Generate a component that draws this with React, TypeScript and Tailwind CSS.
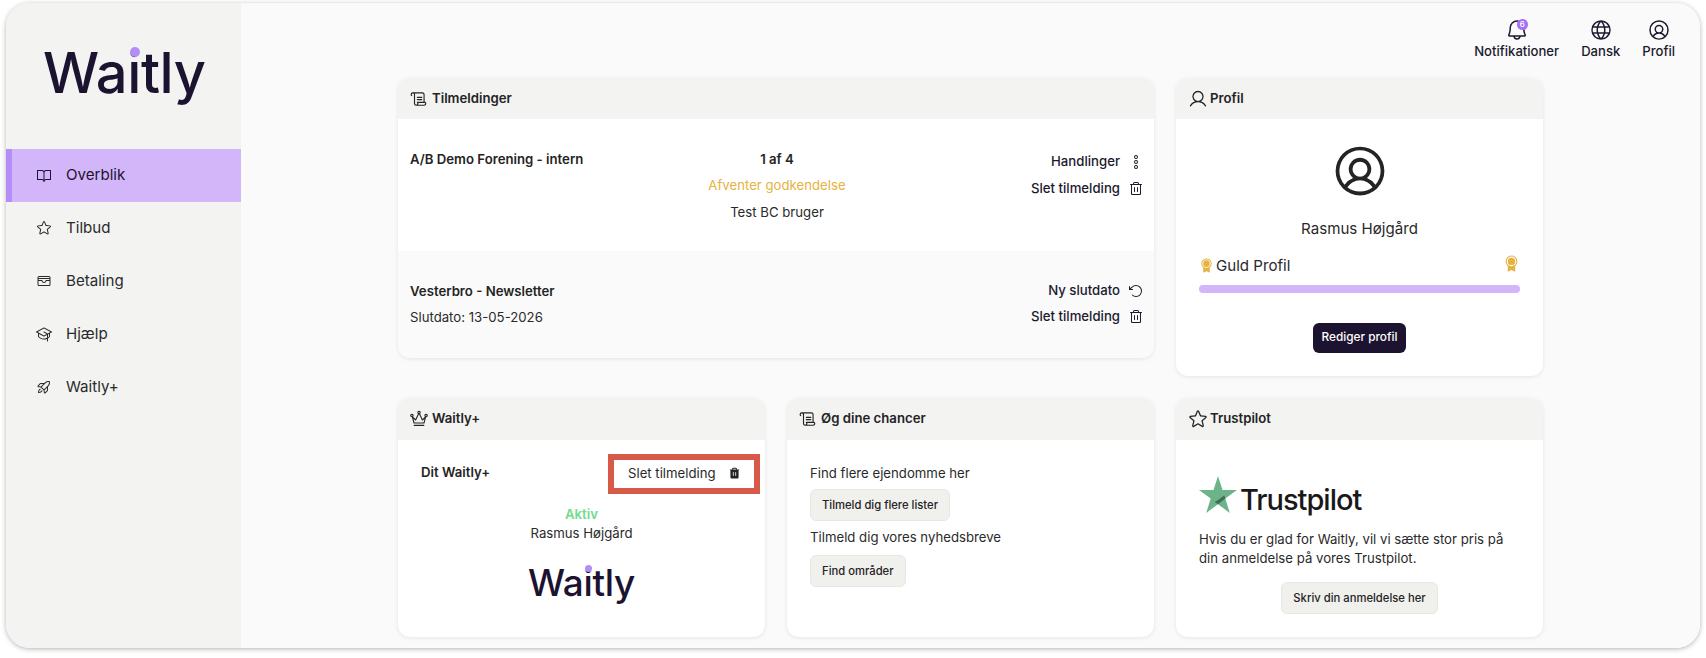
import React from "react";
import {
  PiArrowCounterClockwise,
  PiBell,
  PiBookOpen,
  PiCardholder,
  PiDotsThreeOutlineVertical,
  PiGlobe,
  PiGraduationCap,
  PiMedalFill,
  PiRocketLaunch,
  PiScroll,
  PiStar,
  PiTrash,
  PiTrashFill,
  PiUser,
  PiUserCircle,
} from "react-icons/pi";

const navItems = [
  { label: "Overblik", icon: PiBookOpen, active: true },
  { label: "Tilbud", icon: PiStar },
  { label: "Betaling", icon: PiCardholder },
  { label: "Hjælp", icon: PiGraduationCap },
  { label: "Waitly+", icon: PiRocketLaunch },
];

const CrownIcon = () => (
  <svg width="18" height="18" viewBox="0 0 18 18" fill="none" stroke="currentColor" strokeWidth="1.1">
    <circle cx="1.9" cy="5.6" r="1.2" />
    <circle cx="9" cy="2.6" r="1.2" />
    <circle cx="16.1" cy="5.6" r="1.2" />
    <path d="M2.4 6.8L4 13h10l1.6-6.2L12.4 10 9.4 3.8h-.8L5.6 10z" strokeLinejoin="round" />
    <path d="M4.2 15.4h9.6" strokeLinecap="round" />
  </svg>
);

const Logo = ({ big }: { big?: boolean }) => (
  <span
    className={`font-medium text-[#1c1330] inline-block ${
      big ? "text-[56px] leading-[56px] tracking-[-0.4px]" : "text-[37px] leading-[38px] tracking-[-0.3px]"
    }`}
  >
    Wa
    <span className="relative">
      i
      <span
        className={`absolute rounded-full bg-[#b48df7] ${
          big ? "w-[10px] h-[10px] left-[3px] top-[8px]" : "w-[7px] h-[7px] left-[2px] top-[5px]"
        }`}
      />
    </span>
    tly
  </span>
);

const Card = ({
  title,
  icon,
  className,
  headerClass = "h-[42px]",
  children,
}: {
  title: string;
  icon: React.ReactNode;
  className?: string;
  headerClass?: string;
  children: React.ReactNode;
}) => (
  <div className={`rounded-xl bg-white shadow-[0_1px_4px_rgba(0,0,0,0.09)] overflow-hidden flex flex-col ${className ?? ""}`}>
    <div className={`shrink-0 bg-[#f3f3f2] flex items-center gap-1 px-3 text-[13.2px] font-semibold text-[#242424] ${headerClass}`}>
      {icon}
      {title}
    </div>
    {children}
  </div>
);

const ActionLine = ({
  label,
  icon: Icon,
  tight,
}: {
  label: string;
  icon: React.ElementType;
  tight?: boolean;
}) => (
  <div
    className={`flex items-center justify-end gap-2 text-[13.2px] font-medium text-[#1c1a2e] ${
      tight ? "h-[26px]" : "h-[27px]"
    }`}
  >
    {label}
    <Icon size={16} />
  </div>
);

const GreyButton = ({ children }: { children: React.ReactNode }) => (
  <button className="h-[32px] px-[11px] rounded-md bg-[#f0f0ed] border border-[#e7e7e4] text-[11.25px] font-medium text-[#242424]">
    {children}
  </button>
);

const TopItem = ({ label, children }: { label: string; children: React.ReactNode }) => (
  <div className="flex flex-col items-center gap-[1px] text-[13.1px] font-medium text-[#1c1a2e] leading-4">
    {children}
    {label}
  </div>
);

export default function App() {
  return (
    <div className="w-[1706px] h-[658px] bg-white pt-[3px] px-[6px] font-['Inter',sans-serif] overflow-hidden">
      <div className="h-[645px] flex rounded-3xl overflow-hidden shadow-[0_1px_5px_rgba(0,0,0,0.3)]">
        <aside className="w-[235px] shrink-0 bg-[#f3f3f2]">
          <div className="h-[146px] pl-[37px] pt-[42px]">
            <Logo big />
          </div>
          <nav>
            {navItems.map((item) => (
              <div
                key={item.label}
                className={`h-[53px] flex items-center gap-[14px] pl-[30px] pb-[1px] text-[15.1px] ${
                  item.active
                    ? "bg-[#d3b5f9] border-l-[6px] border-[#b48df7] !pl-[24px] text-[#1c1330]"
                    : "text-[#2a2a2a]"
                }`}
              >
                <item.icon size={16} />
                {item.label}
              </div>
            ))}
          </nav>
        </aside>

        <main className="flex-1 bg-[#fafafa] flex flex-col">
          <div className="h-[75px] flex justify-end gap-[22px] pr-[25px] pt-[15px]">
            <TopItem label="Notifikationer">
              <div className="relative">
                <PiBell size={24} />
                <span className="absolute top-[1px] right-[1px] w-[11px] h-[11px] rounded-full bg-[#a56ef5] text-white text-[8px] leading-[11px] text-center">
                  6
                </span>
              </div>
            </TopItem>
            <TopItem label="Dansk">
              <PiGlobe size={24} />
            </TopItem>
            <TopItem label="Profil">
              <PiUserCircle size={24} />
            </TopItem>
          </div>

          <div className="ml-[157px] w-[1145px] grid grid-cols-[367px_367px_367px] gap-x-[22px] gap-y-[22px] items-start">
            <Card title="Tilmeldinger" icon={<PiScroll size={18} />} headerClass="h-[41px]" className="col-span-2 h-[280px]">
              <div className="h-[132px] grid grid-cols-3 pl-3 pr-[10px] pt-[22px] text-[13.2px]">
                <p className="font-semibold text-[#242424] leading-[28px] mt-[4px]">A/B Demo Forening - intern</p>
                <div className="text-center text-[#2a2a2a] mt-[4px]">
                  <p className="font-semibold leading-[28px] text-[#242424]">1 af 4</p>
                  <p className="leading-[25px] text-[#e7b23f]">Afventer godkendelse</p>
                  <p className="leading-[28px]">Test BC bruger</p>
                </div>
                <div className="mt-[7px]">
                  <ActionLine label="Handlinger" icon={PiDotsThreeOutlineVertical} />
                  <ActionLine label="Slet tilmelding" icon={PiTrash} />
                </div>
              </div>
              <div className="flex-1 bg-[#fafafa] flex justify-between pl-3 pr-[10px] pt-[26px] text-[13.2px]">
                <div className="text-[#2a2a2a]">
                  <p className="font-semibold leading-[28px] text-[#242424]">Vesterbro - Newsletter</p>
                  <p className="leading-[26px] mt-[-1px]">Slutdato: 13-05-2026</p>
                </div>
                <div className="mt-[1px]">
                  <ActionLine label="Ny slutdato" icon={PiArrowCounterClockwise} tight />
                  <ActionLine label="Slet tilmelding" icon={PiTrash} tight />
                </div>
              </div>
            </Card>

            <Card title="Profil" icon={<PiUser size={20} className="-mr-[2px]" />} headerClass="h-[41px]" className="h-[298px]">
              <div className="flex flex-col items-center pt-[22px] px-[23px] text-[#2a2a2a]">
                <PiUserCircle size={60} className="text-[#242424]" />
                <p className="text-[15.1px] leading-6 mt-[16px]">Rasmus Højgård</p>
                <div className="w-full flex items-center justify-between mt-[13px] h-[24px]">
                  <span className="flex items-center gap-[2px] text-[15.1px]">
                    <PiMedalFill size={15} className="text-[#e7b23f]" />
                    Guld Profil
                  </span>
                  <PiMedalFill size={17} className="text-[#e7b23f] -mt-[6px]" />
                </div>
                <div className="w-full h-2 rounded-full bg-[#d3b5f9] mt-[7px]" />
                <button className="mt-[30px] h-[30px] w-[93px] rounded-md bg-[#1c1330] text-white text-[11.8px] font-medium">
                  Rediger profil
                </button>
              </div>
            </Card>

            <Card title="Waitly+" icon={<CrownIcon />} className="h-[239px]">
              <div className="flex items-center justify-between pl-[23px] pr-[5px] pt-[14px]">
                <span className="text-[13.2px] font-semibold text-[#242424] -mt-[2px]">Dit Waitly+</span>
                <div className="w-[152px] h-[40px] border-[6px] border-[#d65a47] flex items-center justify-between pl-[14px] pr-[13px] text-[13.2px] text-[#2a2a2a]">
                  Slet tilmelding
                  <PiTrashFill size={13} className="text-[#242424] -mt-[2px]" />
                </div>
              </div>
              <div className="flex flex-col items-center pt-[11px] text-[13.2px] text-[#2a2a2a] leading-[19px]">
                <span className="font-semibold text-[#70dc8b]">Aktiv</span>
                <span>Rasmus Højgård</span>
                <div className="mt-[21px]">
                  <Logo />
                </div>
              </div>
            </Card>

            <Card title="Øg dine chancer" icon={<PiScroll size={18} />} className="h-[239px]">
              <div className="flex flex-col items-start pl-[23px] pt-[24px] text-[13.2px] text-[#2a2a2a]">
                <p className="leading-[19px]">Find flere ejendomme her</p>
                <div className="mt-[6px]">
                  <GreyButton>Tilmeld dig flere lister</GreyButton>
                </div>
                <p className="leading-[19px] mt-[7px]">Tilmeld dig vores nyhedsbreve</p>
                <div className="mt-[8px]">
                  <GreyButton>Find områder</GreyButton>
                </div>
              </div>
            </Card>

            <Card title="Trustpilot" icon={<PiStar size={20} className="-mr-[2px]" />} className="h-[239px]">
              <div className="flex flex-col px-[23px] pt-[35px] text-[13.2px] text-[#2a2a2a]">
                <div className="flex items-end gap-[3px] h-[38px]">
                  <svg width="38" height="37" viewBox="0 0 38 37">
                    <path fill="#6cb38a" d="M19 0l4.5 14H38L26.3 22.6 30.8 37 19 28.2 7.2 37l4.5-14.4L0 14h14.5z" />
                    <path fill="#3f6f52" d="M26.3 22.6l-1-3.1L19 24l-3.2 2 3.2 2.2z" />
                  </svg>
                  <span className="text-[29px] font-medium tracking-[-1px] leading-[36px] -mb-[5px] text-[#191919]">Trustpilot</span>
                </div>
                <p className="leading-[19px] mt-[17px]">
                  Hvis du er glad for Waitly, vil vi sætte stor pris på din anmeldelse på vores Trustpilot.
                </p>
                <div className="flex justify-center mt-[14px]">
                  <GreyButton>Skriv din anmeldelse her</GreyButton>
                </div>
              </div>
            </Card>
          </div>
        </main>
      </div>
    </div>
  );
}
